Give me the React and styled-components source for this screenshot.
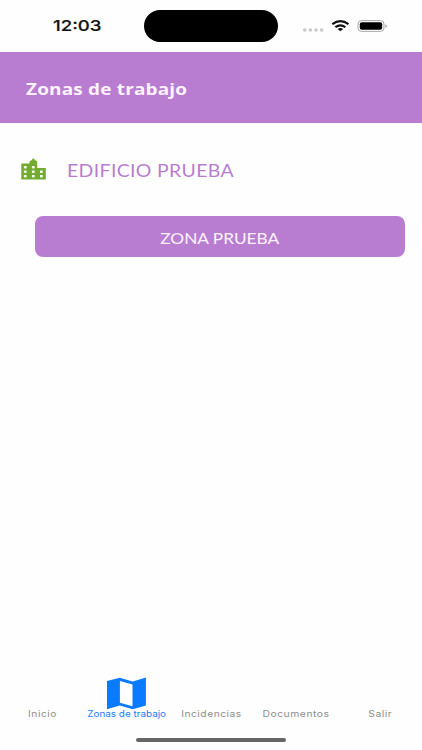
import React, { useState } from 'react'
import styled, { createGlobalStyle } from 'styled-components';

const GlobalStyle = createGlobalStyle`
    * {
        box-sizing: border-box;
    }

    body {
        margin: 0;
        background: #fefefe;
    }
`

const Screen = styled.div`
    display: flex;
    flex-direction: column;
    width: 100%;
    height: 750px;
    overflow: hidden;
    background: #fefefe;
`

// the lettering is wider than the font's own, so every label can be stretched
const Label = styled.span`
    display: inline-block;
    white-space: nowrap;
    transform: scaleX(${props => props.$stretch || 1});
    transform-origin: ${props => props.$origin || 'left'} center;
`

const StatusBar = styled.div`
    display: grid;
    grid-template-columns: 144px 134px 1fr;
    align-items: center;
    height: 52px;
    flex: none;
`

const Clock = styled.div`
    padding: 0 0 0 53px;
    font: 500 15px/20px Inter, sans-serif;
    color: #111;
    -webkit-text-stroke: 0.2px #111;
`

const Island = styled.div`
    height: 32px;
    border-radius: 16px;
    background: #000;
`

const Signals = styled.div`
    display: flex;
    align-items: center;
    padding-left: 24px;
`

const Header = styled.header`
    display: flex;
    align-items: center;
    height: 70.5px;
    flex: none;
    padding: 3px 0 0 26px;
    background: #b87dd0;
    color: #fdf3ff;
    font: 700 16.5px/24px 'Open Sans', sans-serif;
    letter-spacing: 0.15px;
`

const Content = styled.main`
    flex: 1;
    padding: 35.5px 17.5px 0 21px;
`

const Building = styled.div`
    display: flex;
    align-items: center;
    height: 24px;
    color: #b87dd0;
    font: 400 17px/24px Lato, sans-serif;
    letter-spacing: 0.3px;

    svg {
        flex: none;
        margin: -2px 21px 0 0;
    }

    ${Label} {
        padding-top: 2px;
    }
`

const ZoneButton = styled.button`
    display: flex;
    align-items: center;
    justify-content: center;
    width: 370px;
    height: 41px;
    margin: 34px 0 0 13.6px;
    padding: 2px 0 0;
    border: 0;
    border-radius: 8px;
    background: #b87dd0;
    color: #fdf3ff;
    font: 400 15px/20px Lato, sans-serif;
`

const TabBar = styled.nav`
    display: grid;
    grid-template-columns: repeat(5, 1fr);
    height: 42px;
    flex: none;
`

const Tab = styled.a`
    display: flex;
    flex-direction: column;
    align-items: center;
    justify-content: flex-end;
    color: ${props => props.$active ? '#1a7cf8' : '#8e8e8e'};
    font: 400 9px/10px Inter, sans-serif;
    letter-spacing: ${props => props.$active ? '0' : '0.45px'};

    svg {
        display: block;
        flex: none;
        margin-bottom: -1px;
    }

    ${Label} {
        padding-left: 0.8px;
    }
`

const HomeArea = styled.div`
    display: flex;
    justify-content: center;
    height: 31px;
    flex: none;
    padding-top: 19px;
`

const HomeBar = styled.div`
    width: 150px;
    height: 4px;
    border-radius: 2px;
    background: #666;
`

const StatusIcons = () => (
    <svg width="90" height="20" viewBox="302 16 90 20">
        <g fill="#c8c8c8">
            <circle cx="304.8" cy="30" r="1.8" />
            <circle cx="310.4" cy="30" r="1.8" />
            <circle cx="316" cy="30" r="1.8" />
            <circle cx="321.6" cy="30" r="1.8" />
        </g>
        <g fill="none" stroke="#111" strokeWidth="2.1">
            <path d="M332.3 24.2Q340.4 18.2 348.5 24.2" />
            <path d="M335.4 27.1Q340.4 23.6 345.4 27.1" />
        </g>
        <path fill="#111" d="M337.6 29Q340.4 27 343.2 29L340.4 31.3Z" />
        <rect x="358" y="20.6" width="26" height="10.8" rx="3.4" fill="none" stroke="#aaa" />
        <rect x="359.8" y="22.2" width="22.4" height="7.6" rx="2" fill="#000" />
        <path fill="#aaa" d="M385.4 24.2Q387 24.6 387 26T385.4 27.8Z" />
    </svg>
)

const windows = [
    [25.3, 167.2], [33.3, 167.2],
    [25.3, 171.7], [33.3, 171.7], [41.4, 171.7],
    [25.3, 176.2], [33.3, 176.2], [41.4, 176.2],
]

const BuildingIcon = () => (
    <svg width="25" height="22" viewBox="21 158 25 22">
        <path fill="#72ab30" d="M21.3 179.5V163.4H29.5V161.2L32 160Q32.2 158.6 33.3 158.6T34.7 160L37.2 161.2V168H45.8V179.5Z" />
        {windows.map(([x, y]) => (
            <rect key={`${x}-${y}`} x={x - 1.4} y={y - 1.2} width="2.8" height="2.4" fill="#f4faec" />
        ))}
    </svg>
)

const MapIcon = () => (
    <svg width="40" height="33" viewBox="106.9 677 40 33">
        <path fill="#0a7aff" fillRule="evenodd" d="M106.9 681L119.6 677.8L132.6 681.6L145.8 677.4V705.6L132.7 709.2L119.6 705.4L106.9 709.2ZM119.8 681V702.8L132.4 706.2V684.4Z" />
    </svg>
)

const tabs = [
    { name: 'Inicio', stretch: 1.14 },
    { name: 'Zonas de trabajo', stretch: 1.1 },
    { name: 'Incidencias', stretch: 1.14 },
    { name: 'Documentos', stretch: 1.15 },
    { name: 'Salir', stretch: 1.15 },
]

const App = () => {
    const [active, setActive] = useState('Zonas de trabajo')

    return (
        <Screen>
            <GlobalStyle/>
            <StatusBar>
                <Clock><Label $stretch={1.24}>12:03</Label></Clock>
                <Island/>
                <Signals><StatusIcons/></Signals>
            </StatusBar>
            <Header>
                <Label $stretch={1.15}>Zonas de trabajo</Label>
            </Header>
            <Content>
                <Building>
                    <BuildingIcon/>
                    <Label $stretch={1.145}>EDIFICIO PRUEBA</Label>
                </Building>
                <ZoneButton>
                    <Label $stretch={1.15} $origin="center">ZONA PRUEBA</Label>
                </ZoneButton>
            </Content>
            <TabBar>
                {tabs.map(tab => (
                    <Tab key={tab.name} $active={tab.name === active} onClick={() => setActive(tab.name)}>
                        {tab.name === active && <MapIcon/>}
                        <Label $stretch={tab.stretch} $origin="center">{tab.name}</Label>
                    </Tab>
                ))}
            </TabBar>
            <HomeArea>
                <HomeBar/>
            </HomeArea>
        </Screen>
    )
}

export default App;
